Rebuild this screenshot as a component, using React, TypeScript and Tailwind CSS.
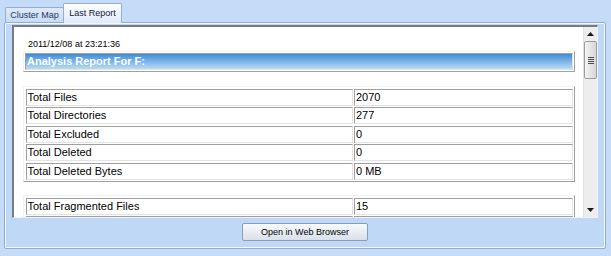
const summaryRows = [
    ['Total Files', '2070'],
    ['Total Directories', '277'],
    ['Total Excluded', '0'],
    ['Total Deleted', '0'],
    ['Total Deleted Bytes', '0 MB'],
]

// only the first row is in view, the next one just peeks in under the fold
const fragmentRows = [
    ['Total Fragmented Files', '15'],
    ['', ''],
]

const cell =
    'h-[17px] border border-t-[#a0a0a0] border-l-[#a0a0a0] border-r-[#e3e3e3] border-b-[#e3e3e3] px-[1px] text-[11px] leading-[15px] text-black whitespace-nowrap overflow-hidden'

function ReportTable({ rows, className = '' }: { rows: string[][]; className?: string }) {
    return (
        <div
            className={`ml-[9px] w-[552px] border border-t-[#f2f2f2] border-l-[#f2f2f2] border-r-[#a0a0a0] border-b-[#a0a0a0] p-[1.5px] flex flex-col gap-[1.5px] ${className}`}
        >
            {rows.map(([label, value], i) => (
                <div key={i} className="flex gap-[1.5px]">
                    <div className={`${cell} w-[327px]`}>{label}</div>
                    <div className={`${cell} flex-1`}>{value}</div>
                </div>
            ))}
        </div>
    )
}

function Arrow({ down = false }: { down?: boolean }) {
    return (
        <svg width="7" height="4" viewBox="0 0 7 4">
            <polygon points={down ? '0,0 7,0 3.5,4' : '3.5,0 7,4 0,4'} fill="#1a1a1a" />
        </svg>
    )
}

function ScrollBar() {
    return (
        <div className="w-[14px] flex flex-col bg-[#ededed] border-l border-[#e2e2e2]">
            <div className="h-[14px] flex items-center justify-center">
                <Arrow />
            </div>
            <div className="h-[38px] rounded-[2px] border border-[#9d9d9d] bg-gradient-to-r from-[#f4f4f4] to-[#d6d6d6] flex flex-col items-center justify-center gap-[1px]">
                <div className="w-[6px] h-[1px] bg-[#4d4d4d]" />
                <div className="w-[6px] h-[1px] bg-[#4d4d4d]" />
                <div className="w-[6px] h-[1px] bg-[#4d4d4d]" />
                <div className="w-[6px] h-[1px] bg-[#4d4d4d]" />
            </div>
            <div className="flex-1" />
            <div className="h-[14px] flex items-center justify-center">
                <Arrow down />
            </div>
        </div>
    )
}

export default function App() {
    return (
        <div className="w-[611px] h-[256px] overflow-hidden bg-[#c5dcf8] font-['Liberation_Sans',Arial,sans-serif]">
            {/* tabs */}
            <div className="h-[22px] flex items-end pl-[5px]">
                <div className="w-[59px] h-[15px] border border-b-0 border-[#98aecd] rounded-t-[2px] bg-gradient-to-b from-[#dde9fa] to-[#c9ddf7] flex items-center justify-center text-[9px] leading-[11px] text-[#1c3a62]">
                    Cluster Map
                </div>
                <div className="relative z-10 -ml-[1px] -mb-[1px] w-[59px] h-[20px] border border-b-0 border-[#98aecd] rounded-t-[2px] bg-gradient-to-b from-[#fdfeff] to-[#dfeafa] flex items-center justify-center text-[9px] leading-[11px] text-[#0f2138]">
                    Last Report
                </div>
            </div>

            {/* tab page */}
            <div className="ml-[4px] w-[602px] h-[227px] border border-[#93acd0] rounded-[2px] bg-[#bfd8f6] shadow-[inset_1px_1px_0_#f3f8fe,inset_-1px_-1px_0_#f3f8fe] pt-[2px] pl-[7px]">
                <div className="w-[586px] h-[193px] flex border-l-2 border-t-2 border-[#7b7b7b] border-r border-b border-r-[#eef3fb] border-b-[#eef3fb]">
                    <div className="w-[569px] bg-white overflow-hidden">
                        <div className="mt-[12px] pl-[14px] text-[9px] leading-[11px] text-black">
                            2011/12/08 at 23:21:36
                        </div>
                        <div className="mt-[1px] ml-[9px] w-[552px] border border-t-[#f2f2f2] border-l-[#f2f2f2] border-r-[#a0a0a0] border-b-[#a0a0a0] p-[1px]">
                            <div className="h-[17px] border border-t-[#a0a0a0] border-l-[#a0a0a0] border-r-[#e3e3e3] border-b-[#e3e3e3] bg-gradient-to-b from-[#3a8dd6] to-[#b9dbf6] pl-[1px] text-[11px] leading-[15px] font-bold text-white">
                                Analysis Report For F:
                            </div>
                        </div>
                        <ReportTable rows={summaryRows} className="mt-[14px]" />
                        <ReportTable rows={fragmentRows} className="mt-[13px]" />
                    </div>
                    <ScrollBar />
                </div>

                <div className="w-[586px] flex justify-center pt-[5px]">
                    <button className="w-[126px] h-[18px] rounded-[2px] border border-[#8c9cb2] bg-gradient-to-b from-[#f9fafc] to-[#d8e0ea] text-[9px] leading-[11px] text-black">
                        Open in Web Browser
                    </button>
                </div>
            </div>
        </div>
    )
}
